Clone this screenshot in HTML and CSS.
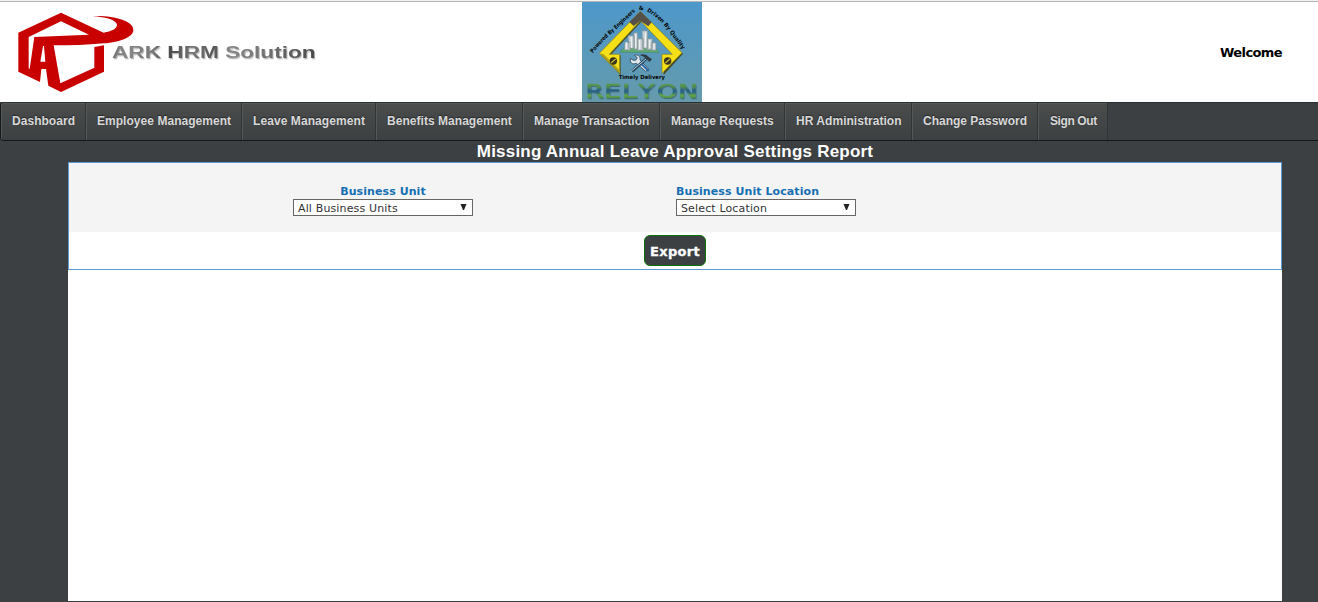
FILE: index.html
```
<!DOCTYPE html>
<html lang="en">
<head>
<meta charset="utf-8">
<title>ARK HRM Solution</title>
<link rel="stylesheet" href="styles.css">
</head>
<body>
<header class="header">
  <svg class="brand" width="330" height="100" viewBox="0 6 990 300" aria-label="ARK HRM Solution">
    <defs>
      <linearGradient id="steel" gradientUnits="userSpaceOnUse" x1="338" y1="0" x2="946" y2="0">
        <stop offset="0" stop-color="#777"/><stop offset=".07" stop-color="#888"/><stop offset=".2" stop-color="#777"/>
        <stop offset=".28" stop-color="#4c4c4c"/><stop offset=".4" stop-color="#777"/><stop offset=".5" stop-color="#555"/>
        <stop offset=".58" stop-color="#888"/><stop offset=".72" stop-color="#777"/><stop offset="1" stop-color="#4a4a4a"/>
      </linearGradient>
      <filter id="textshade" x="-5%" y="-20%" width="110%" height="150%"><feDropShadow dx="3" dy="4" stdDeviation="2" flood-color="#777" flood-opacity=".5"/></filter>
    </defs>
    <path fill="#c80000" d="M183 38L311 98C335 94 351 86 351 75C350 60 320 51 277 48C340 45 400 62 400 89C400 112 360 126 311 130C260 135 212 136 161 136L181 250L283 203V141L312 136V215L183 276L145 257L138 207H124L120 246L55 215V98ZM183 64L86 111V205L89 207L103 111L267 104ZM129 138L121 185H136L132 138Z" fill-rule="evenodd"/>
    <text class="brand-text" x="336" y="175" textLength="611" lengthAdjust="spacingAndGlyphs" fill="url(#steel)" filter="url(#textshade)">ARK HRM Solution</text>
  </svg>
  <svg class="company" width="120" height="100" viewBox="18 6 360 300" aria-label="Relyon">
    <defs>
      <linearGradient id="sky" x1="0" y1="0" x2="0" y2="1"><stop offset="0" stop-color="#4d98ca"/><stop offset="1" stop-color="#659aab"/></linearGradient>
      <linearGradient id="relyon" gradientUnits="userSpaceOnUse" x1="0" y1="250" x2="0" y2="296"><stop offset="0" stop-color="#5c9c48"/><stop offset=".25" stop-color="#4e8b50"/><stop offset=".45" stop-color="#28608a"/><stop offset=".6" stop-color="#2d6a80"/><stop offset=".78" stop-color="#62a745"/><stop offset="1" stop-color="#4a8748"/></linearGradient>
      <filter id="bevel" x="-5%" y="-20%" width="110%" height="150%"><feDropShadow dx="1.5" dy="3" stdDeviation="1" flood-color="#31546b" flood-opacity=".7"/></filter>
      <path id="leftArc" d="M50 160Q78 126 107 100T182 30"/>
      <path id="rightArc" d="M212 34Q250 54 282 98T322 154"/>
    </defs>
    <rect x="18" y="6" width="360" height="300" fill="url(#sky)"/>
    <path d="M193 34L318 158L260 222V163H289L193 62L100 163H131V222L70 160Z" fill="#4a4a25" transform="translate(3 3)"/>
    <path d="M193 34L318 158L258 220V163H289L193 62L100 163H131V220L70 160Z" fill="#f5df16" stroke="#8b8421" stroke-width="2"/>
    <path d="M193 34L227 67L217 79L193 62L173 78L160 66Z" fill="#555049"/>
    <path d="M70 160L131 220V211L83 163Z" fill="#aaa11c"/>
    <path d="M160 126H225L249 157H132Z" fill="#61ac69" stroke="#498b76" stroke-width="2"/>
    <path d="M147 127H164V150H145ZM156 107H175V145H159ZM173 98H185V148H174ZM184 116H202V151H184ZM198 92H215V145H200ZM215 116H229V149H213ZM226 128H240V151H225Z" fill="#c4cdd1" stroke="#7f9094" stroke-width="2"/>
    <path d="M151 127V147M166 110V143M179 102V143M191 120V148M208 97V142M221 120V145M234 131V148" stroke="#edf0f1" stroke-width="4"/>
    <path d="M164 174C159 188 170 195 181 190L209 214L218 207L192 180C194 168 185 163 175 166L184 173L179 181L169 180Z" fill="#e0e8eb" stroke="#405c71" stroke-width="3"/>
    <path d="M211 176L168 214" stroke="#294861" stroke-width="9"/>
    <path d="M210 177L166 213" stroke="#b7ccd9" stroke-width="3"/>
    <path d="M191 165Q207 158 221 173L228 177L221 186L212 178Q204 169 191 165Z" fill="#303c44"/>
    <path d="M197 193L218 213" stroke="#2d64a4" stroke-width="6"/>
    <g fill="#343223"><circle cx="112" cy="183" r="11"/><circle cx="275" cy="183" r="11"/></g>
    <path d="M105 189L119 177M268 189L282 177" stroke="#c4b332" stroke-width="4"/>
    <g class="motto">
      <text><textPath href="#leftArc" textLength="180" lengthAdjust="spacingAndGlyphs">Powered By Engineers</textPath></text>
      <text x="188" y="29">&amp;</text>
      <text><textPath href="#rightArc" textLength="158" lengthAdjust="spacingAndGlyphs">Driven By Quality</textPath></text>
      <text x="128" y="236" textLength="139" lengthAdjust="spacingAndGlyphs">Timely Delivery</text>
    </g>
    <text class="relyon-text" transform="scale(1.35 1)" x="21 63 103 139 180 227" y="295" fill="url(#relyon)" stroke="url(#relyon)" filter="url(#bevel)">RELYON</text>
  </svg>
  <span class="welcome">Welcome</span>
</header>
<nav class="nav">
  <a class="nav-item dashboard">Dashboard</a>
  <a class="nav-item employees">Employee Management</a>
  <a class="nav-item leave">Leave Management</a>
  <a class="nav-item benefits">Benefits Management</a>
  <a class="nav-item transaction">Manage Transaction</a>
  <a class="nav-item requests">Manage Requests</a>
  <a class="nav-item admin">HR Administration</a>
  <a class="nav-item password">Change Password</a>
  <a class="nav-item signout">Sign Out</a>
</nav>
<h1 class="title">Missing Annual Leave Approval Settings Report</h1>
<main class="content">
  <section class="panel">
    <div class="filters">
      <div class="field centered">
        <span class="label">Business Unit</span>
        <div class="select"><span>All Business Units</span><svg class="arrow" width="7" height="6" viewBox="0 0 7 6"><path d="M.5 0H6.5L4 6H3Z"/></svg></div>
      </div>
      <div class="field">
        <span class="label">Business Unit Location</span>
        <div class="select"><span>Select Location</span><svg class="arrow" width="7" height="6" viewBox="0 0 7 6"><path d="M.5 0H6.5L4 6H3Z"/></svg></div>
      </div>
    </div>
    <div class="actions"><button class="export">Export</button></div>
  </section>
</main>
</body>
</html>
```
FILE: styles.css
```
* { box-sizing: border-box; }
body {
  margin: 0;
  height: 602px;
  overflow: hidden;
  background: #3c4043;
  font-family: Verdana, "DejaVu Sans", sans-serif;
}
.header {
  height: 102px;
  display: grid;
  grid-template-columns: 582px 120px 1fr;
  align-items: start;
  border-top: 1px solid #f2f2f2;
  box-shadow: inset 0 1px #b5b5b5;
  padding-top: 1px;
  background-color: #fff;
}
.brand, .company { display: block; overflow: visible; }
.brand-text { font: bold 52px "Liberation Sans", Arial, sans-serif; }
.motto { font: bold 17px "DejaVu Sans", sans-serif; fill: #080808; }
.relyon-text {
  font: 58px "DejaVu Sans", sans-serif;
  stroke-width: 2px;
}
.welcome {
  justify-self: end;
  margin: 42px 36px 0 0;
  font-size: 13px;
  line-height: 17px;
  font-weight: bold;
  letter-spacing: -.6px;
  color: #000;
}
.nav {
  height: 39px;
  display: flex;
  border: 1px solid #16191b;
  border-top-color: #2c2f32;
  border-right: 0;
  border-radius: 4px 0 0 4px;
  background: #3c4043;
}
.nav-item {
  flex: none;
  height: 37px;
  padding: 0 0 0 11px;
  border-right: 1px solid #323537;
  box-shadow: inset 1px 1px #555858;
  background: linear-gradient(#4b4d4c, #3c4042);
  color: #d8d8d8;
  font: bold 12px/37px "Liberation Sans", Arial, sans-serif;
  letter-spacing: .04px;
  white-space: nowrap;
  text-shadow: 0 -1px 1px #25282a;
}
.dashboard { width: 85px; border-radius: 3px 0 0 3px; }
.employees { width: 156px; }
.leave { width: 134px; letter-spacing: .08px; }
.benefits { width: 147px; }
.transaction { width: 137px; letter-spacing: 0; }
.requests { width: 125px; }
.admin { width: 127px; }
.password { width: 126px; letter-spacing: 0; }
.signout { width: 70px; padding-left: 12px; letter-spacing: -.4px; }
.title {
  margin: 0 0 0 32px;
  height: 21px;
  color: #fff;
  font: bold 17px/21px "Liberation Sans", Arial, sans-serif;
  letter-spacing: .21px;
  text-align: center;
}
.content {
  width: 1214px;
  height: 439px;
  margin-left: 68px;
  background: #fff;
}
.panel { height: 108px; border: 1px solid #5b9bd5; }
.filters {
  height: 69px;
  display: flex;
  gap: 203px;
  padding: 20px 0 0 224px;
  background: #f4f4f4;
}
.field { width: 180px; display: flex; flex-direction: column; }
.centered { align-items: center; }
.label {
  height: 16px;
  font-size: 11px;
  line-height: 18px;
  font-weight: bold;
  letter-spacing: .08px;
  color: #176fb3;
  white-space: nowrap;
}
.select {
  width: 180px;
  height: 17px;
  display: flex;
  justify-content: space-between;
  align-items: flex-start;
  padding: 0 5px 0 4px;
  border: 1px solid #666;
  background: #fff;
  color: #333;
  font-size: 11px;
  line-height: 17px;
  letter-spacing: .14px;
}
.arrow { margin-top: 4px; fill: #222; }
.actions { height: 37px; display: flex; justify-content: center; align-items: flex-start; padding-top: 3px; }
.export {
  width: 62px;
  height: 31px;
  padding: 2px 0 0;
  border: 1px solid #087208;
  border-radius: 6px;
  background: #3c4043;
  color: #fff;
  font: bold 13px/28px Verdana, "DejaVu Sans", sans-serif;
  letter-spacing: .3px;
  -webkit-text-stroke: .3px #fff;
}
```
